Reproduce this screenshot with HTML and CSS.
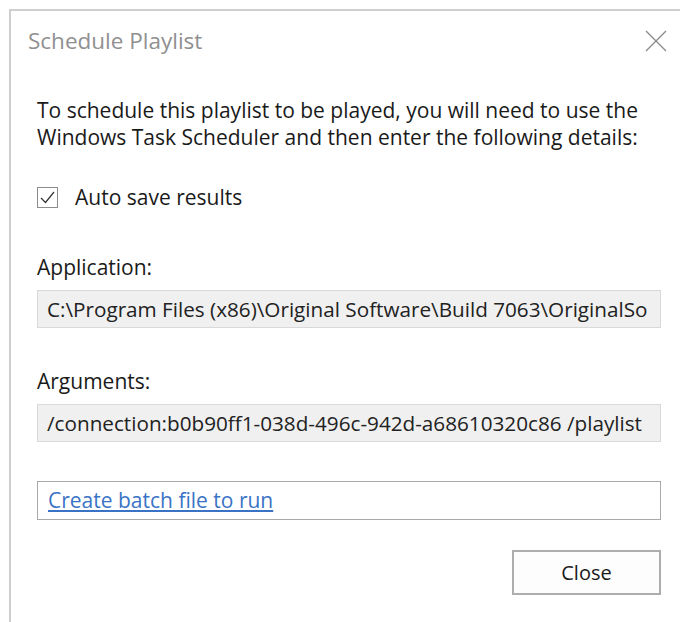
FILE: index.html
```html
<!DOCTYPE html>
<html lang="en">
<head>
<meta charset="utf-8">
<title>Schedule Playlist</title>
<link rel="stylesheet" href="styles.css">
</head>
<body>
<div class="dialog">
  <div class="titlebar">
    <span class="title">Schedule Playlist</span>
    <span class="close-x" aria-label="Close">
      <svg width="22" height="22" viewBox="0 0 22 22"><path d="M1 1 L21 21 M21 1 L1 21" stroke="#8a8a8a" stroke-width="1.3" fill="none"/></svg>
    </span>
  </div>
  <div class="content">
    <p class="intro">To schedule this playlist to be played, you will need to use the<br>Windows Task Scheduler and then enter the following details:</p>
    <label class="check-row">
      <span class="checkbox">
        <svg width="15" height="13" viewBox="0 0 15 13"><path d="M1 7 L5.5 11.5 L14 1" stroke="#333" stroke-width="1.2" fill="none"/></svg>
      </span>
      <span>Auto save results</span>
    </label>
    <div class="field-label">Application:</div>
    <div class="readonly-box">C:\Program Files (x86)\Original Software\Build 7063\OriginalSo</div>
    <div class="field-label args-label">Arguments:</div>
    <div class="readonly-box">/connection:b0b90ff1-038d-496c-942d-a68610320c86 /playlist</div>
    <div class="link-box"><a href="#" class="link">Create batch file to run</a></div>
    <div class="actions">
      <button class="btn">Close</button>
    </div>
  </div>
</div>
</body>
</html>
```
FILE: styles.css
```css
html, body {
  margin: 0;
  padding: 0;
  background: #ffffff;
}

body {
  font-family: "Open Sans", "Noto Sans", sans-serif;
  font-size: 21px;
  color: #1a1a1a;
  padding: 9px 0 0 9px;
  overflow: hidden;
  height: 622px;
  box-sizing: border-box;
}

.dialog {
  border-top: 2px solid #cfcfcf;
  border-left: 2px solid #cfcfcf;
  background: #fff;
  width: 700px;
  height: 640px;
  box-sizing: border-box;
}

.titlebar {
  display: flex;
  align-items: center;
  justify-content: space-between;
  height: 58px;
  padding: 0 14px 0 17px;
  width: 670px;
  box-sizing: border-box;
}

.title {
  color: #909090;
  font-size: 22.5px;
}

.close-x {
  display: flex;
  margin-top: 2px;
}

.content {
  padding: 28px 0 0 26px;
  width: 650px;
  box-sizing: border-box;
}

.intro {
  margin: 0;
  line-height: 27px;
  white-space: nowrap;
}

.check-row {
  display: flex;
  align-items: center;
  gap: 17px;
  margin-top: 34px;
  height: 24px;
}

.checkbox {
  width: 19px;
  height: 19px;
  border: 1px solid #8c8c8c;
  display: flex;
  align-items: center;
  justify-content: center;
}

.field-label {
  margin-top: 46px;
  line-height: 24px;
}

.args-label {
  margin-top: 41px;
}

.readonly-box {
  margin-top: 11px;
  height: 38px;
  border: 1px solid #d9d9d9;
  background: #f0f0f0;
  box-sizing: border-box;
  padding: 0 9px;
  line-height: 36px;
  font-size: 20.7px;
  white-space: nowrap;
  overflow: hidden;
  color: #222;
}

.link-box {
  margin-top: 39px;
  height: 39px;
  border: 1px solid #a9a9a9;
  box-sizing: border-box;
  padding: 0 10px;
  line-height: 37px;
}

.link {
  color: #3a73c6;
  text-decoration: underline;
}

.actions {
  display: flex;
  justify-content: flex-end;
  margin-top: 30px;
}

.btn {
  width: 149px;
  height: 45px;
  border: 2px solid #adadad;
  background: #fdfdfd;
  font-family: inherit;
  font-size: 20px;
  color: #1a1a1a;
}
```
